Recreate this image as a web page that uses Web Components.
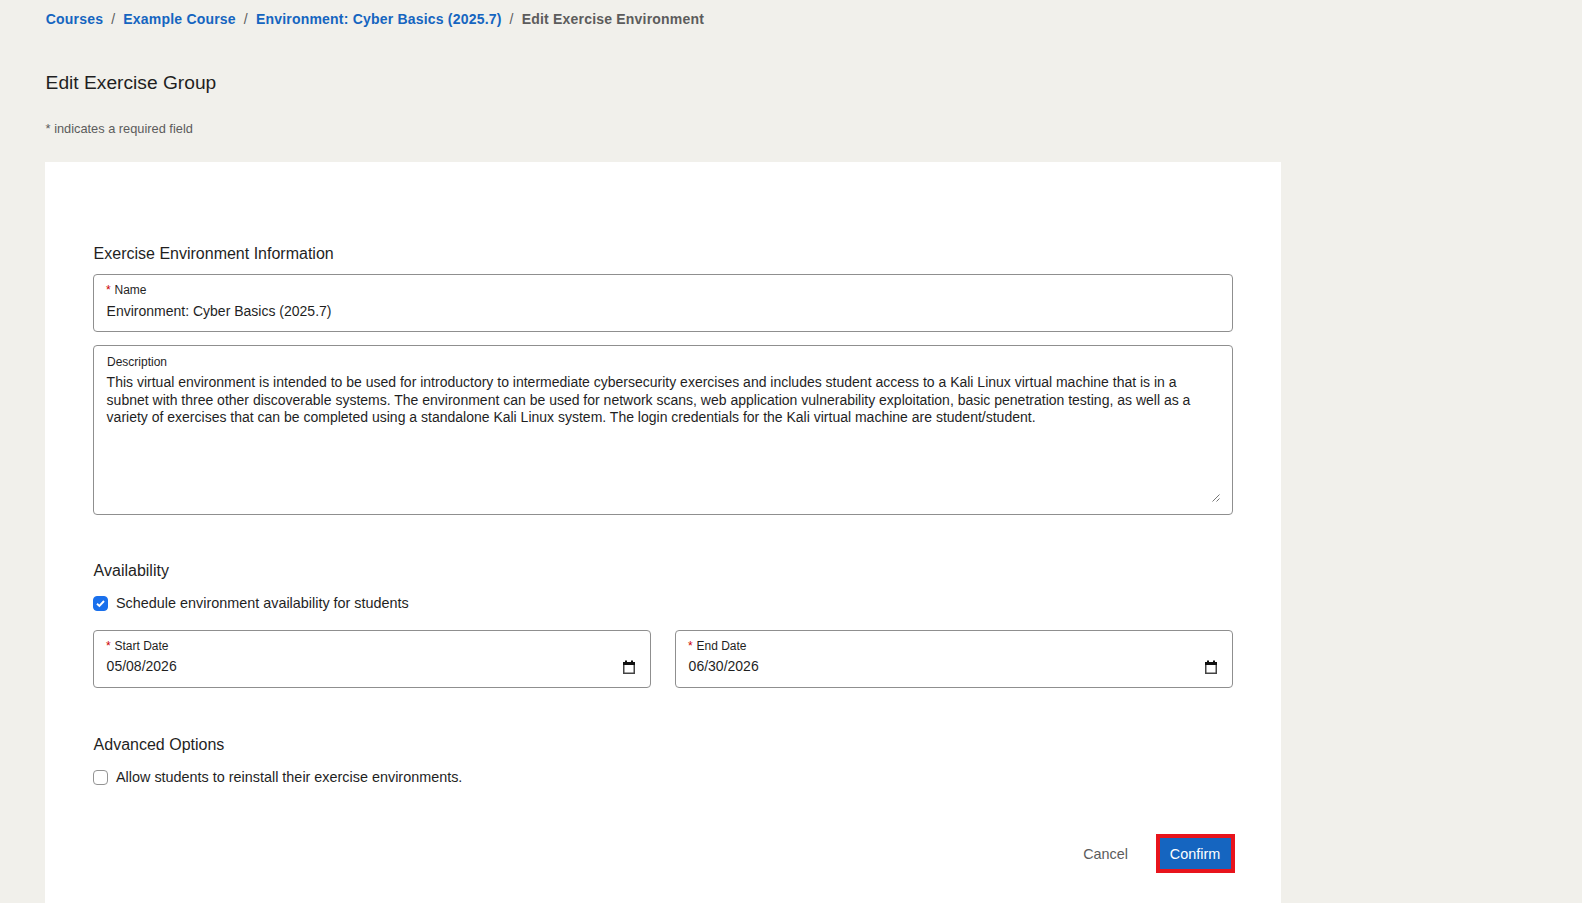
<!DOCTYPE html>
<html lang="en"><head><meta charset="utf-8"><title>Edit Exercise Environment</title>
<style>
html,body{margin:0;height:100%;overflow:hidden;background:#f1f0eb;font-family:"Liberation Sans",Arial,sans-serif;color:#1f1f1f}
app-page{display:block}
</style></head><body>
<app-page>
  <app-breadcrumbs>
    <a slot="c">Courses</a><a slot="c">Example Course</a><a slot="c">Environment: Cyber Basics (2025.7)</a><span slot="c">Edit Exercise Environment</span>
  </app-breadcrumbs>
  <page-heading title="Edit Exercise Group" note="* indicates a required field"></page-heading>
  <form-card>
    <form-section label="Exercise Environment Information">
      <text-field label="Name" required>Environment: Cyber Basics (2025.7)</text-field>
      <text-field label="Description" multiline>This virtual environment is intended to be used for introductory to intermediate cybersecurity exercises and includes student access to a Kali Linux virtual machine that is in a subnet with three other discoverable systems. The environment can be used for network scans, web application vulnerability exploitation, basic penetration testing, as well as a variety of exercises that can be completed using a standalone Kali Linux system. The login credentials for the Kali virtual machine are student/student.</text-field>
    </form-section>
    <form-section label="Availability" style="margin-top:45px">
      <check-box checked>Schedule environment availability for students</check-box>
      <date-row>
        <text-field label="Start Date" required date>05/08/2026</text-field>
        <text-field label="End Date" required date>06/30/2026</text-field>
      </date-row>
    </form-section>
    <form-section label="Advanced Options" style="margin-top:46px">
      <check-box>Allow students to reinstall their exercise environments.</check-box>
    </form-section>
    <form-actions>
      <action-button>Cancel</action-button>
      <action-button primary>Confirm</action-button>
    </form-actions>
  </form-card>
</app-page>
<script>
function def(name, css, html){
  customElements.define(name, class extends HTMLElement{
    connectedCallback(){
      if(this.shadowRoot) return;
      const r=this.attachShadow({mode:'open'});
      r.innerHTML='<style>'+css+'</style>'+(typeof html==='function'?html(this):html);
    }
  });
}
def('app-breadcrumbs',`
  :host{display:flex;padding:12px 45.8px 0;height:14px;font-size:14px;line-height:14px;font-weight:700;letter-spacing:.2px;color:#5c5c5c}
  ::slotted(a){color:#1565c0}
  ::slotted(*){white-space:nowrap}
  ::slotted(*:not(:last-child))::after{content:"/";color:#5c5c5c;font-weight:400;margin:0 8px}
`,'<slot name="c"></slot>');
def('page-heading',`
  :host{display:block;padding:0 45.6px}
  h1{margin:45px 0 0;font-size:19.2px;line-height:24px;font-weight:400;color:#1f1f1f}
  p{margin:27px 0 0;font-size:12.8px;line-height:14px;color:#5c5c5c}
`,h=>`<h1>${h.getAttribute('title')}</h1><p>${h.getAttribute('note')}</p>`);
def('form-card',`
  :host{display:block;box-sizing:border-box;margin:26px 0 0 45px;width:1236px;height:760px;background:#fff;padding:81px 48px 0}
`,'<slot></slot>');
def('form-section',`
  :host{display:block}
  h2{margin:0 0 9px .6px;font-size:16px;line-height:22px;font-weight:400;color:#1f1f1f}
  .b{display:flex;flex-direction:column;gap:13px}
`,h=>`<h2>${h.getAttribute('label')}</h2><div class="b"><slot></slot></div>`);
def('text-field',`
  :host{display:block;box-sizing:border-box;position:relative;flex:none;min-width:0;height:58px;border:1px solid #8f8f8f;border-radius:4px;background:#fff;padding:8px 12px 0}
  :host([date]){flex:1}
  :host([multiline]){height:170px;padding-top:9px}
  :host([date]) .v{margin-top:4px;padding-left:.6px}
  .l{font-size:12px;line-height:14px;color:#1f1f1f}
  .r{color:#c00;margin-right:.5px}
  .v{font-size:14px;line-height:18px;color:#1f1f1f;margin-top:5px;padding-left:.6px}
  :host([multiline]) .v{margin-top:5px;line-height:17.6px;padding-right:16px}
  :host([multiline]) .l{padding-left:1px}
  svg{position:absolute}
  .cal{right:15px;top:28.5px}
  .grip{right:12px;bottom:12px}
`,h=>{
  const m=h.hasAttribute('multiline'),d=h.hasAttribute('date');
  return `<div class="l">${h.hasAttribute('required')?'<span class="r">*</span> ':''}${h.getAttribute('label')}</div><div class="v"><slot></slot></div>`+
  (d?'<svg class="cal" width="12" height="14" viewBox="0 0 12 14"><rect x="0.75" y="2.75" width="10.5" height="10.5" fill="none" stroke="#444" stroke-width="1.5"/><rect x="0" y="2" width="12" height="3" fill="#111"/><rect x="2" y="0.5" width="2" height="2" fill="#111"/><rect x="8" y="0.5" width="2" height="2" fill="#111"/></svg>':'')+
  (m?'<svg class="grip" width="8" height="8" viewBox="0 0 8 8"><path d="M0.5 7.5 7.5 0.5M4.5 7.5 7.5 4.5" stroke="#777" stroke-width="1" fill="none"/></svg>':'');
});
def('check-box',`
  :host{display:flex;align-items:center;gap:8px;margin-top:2px;font-size:14.4px;line-height:20px;color:#1f1f1f}
  .b{box-sizing:border-box;width:15px;height:15px;border:1px solid #949494;border-radius:4px;background:#fff;display:flex;align-items:center;justify-content:center;flex:none}
  :host([checked]) .b{background:#1a70ec;border-color:#1a70ec}
  svg{display:none}
  :host([checked]) svg{display:block}
`,`<span class="b"><svg width="11" height="11" viewBox="0 0 11 11"><path d="M2 5.8 4.4 8 9 3" fill="none" stroke="#fff" stroke-width="1.9"/></svg></span><span><slot></slot></span>`);
def('date-row',`:host{display:flex;gap:24px;margin-top:4px}`,'<slot></slot>');
def('form-actions',`:host{display:flex;justify-content:flex-end;align-items:center;gap:28px;margin:47px -2px 0 0}`,'<slot></slot>');
def('action-button',`
  :host{display:inline-flex;align-items:center;justify-content:center;box-sizing:border-box;height:39px;font-size:14.4px;color:#5c5c5c}
  :host([primary]){width:79px;background:#1565c0;color:#fff;border:4px solid #e8141c;padding-right:1px}
`,'<slot></slot>');
def('app-page',`:host{display:block}`,'<slot></slot>');
</script>
</body></html>
